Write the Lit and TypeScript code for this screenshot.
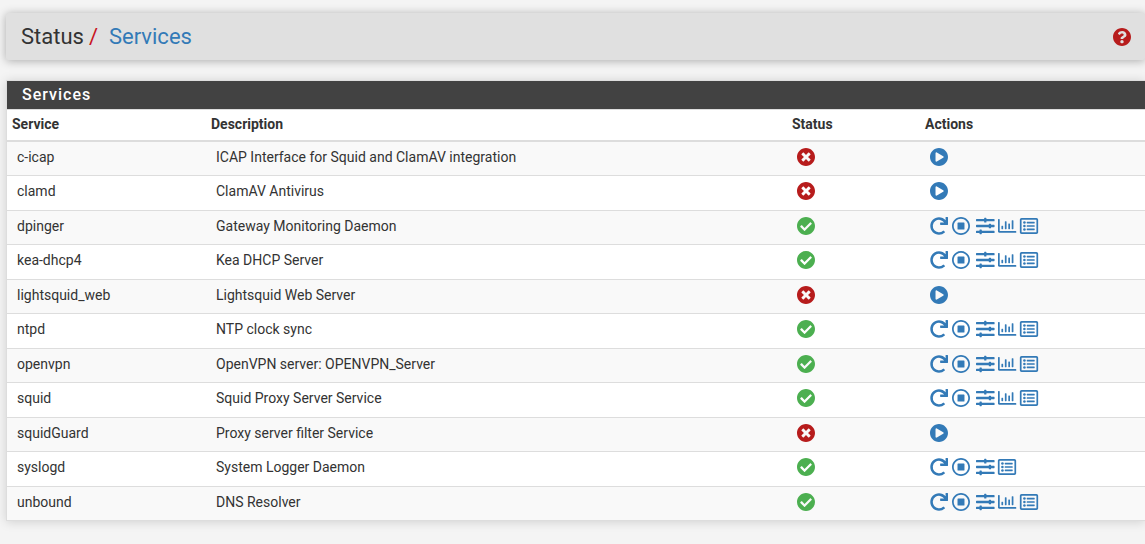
import { LitElement, html, svg, css, nothing } from "lit";
import { customElement, property } from "lit/decorators.js";

type IconName = "help" | "running" | "stopped" | "start" | "restart" | "stop" | "settings" | "graphs" | "logs";

const ICONS: Record<IconName, { box: string; shape: unknown }> = {
  help: {
    box: "8 8 496 496",
    shape: svg`<path d="M504 256c0 136.997-111.043 248-248 248S8 392.997 8 256C8 119.083 119.043 8 256 8s248 111.083 248 248zM262.655 90c-54.497 0-89.255 22.957-116.549 63.758-3.536 5.286-2.353 12.415 2.715 16.258l34.699 26.31c5.205 3.947 12.621 3.008 16.665-2.122 17.864-22.658 30.113-35.797 57.303-35.797 20.429 0 45.698 13.148 45.698 32.958 0 14.976-12.363 22.667-32.534 33.976C247.128 238.528 216 254.941 216 296v4c0 6.627 5.373 12 12 12h56c6.627 0 12-5.373 12-12v-1.333c0-28.462 83.186-29.647 83.186-106.667 0-58.002-60.165-102-116.531-102zM256 338c-25.365 0-46 20.635-46 46 0 25.364 20.635 46 46 46s46-20.636 46-46c0-25.365-20.635-46-46-46z"/>`,
  },
  running: {
    box: "8 8 496 496",
    shape: svg`<path d="M504 256c0 136.967-111.033 248-248 248S8 392.967 8 256 119.033 8 256 8s248 111.033 248 248zM227.314 387.314l184-184c6.248-6.248 6.248-16.379 0-22.627l-22.627-22.627c-6.248-6.249-16.379-6.249-22.628 0L216 308.118l-70.059-70.059c-6.248-6.248-16.379-6.248-22.628 0l-22.627 22.627c-6.248 6.248-6.248 16.379 0 22.627l104 104c6.249 6.249 16.379 6.249 22.628.001z"/>`,
  },
  stopped: {
    box: "8 8 496 496",
    shape: svg`<path d="M256 8C119 8 8 119 8 256s111 248 248 248 248-111 248-248S393 8 256 8zm121.6 313.1c4.7 4.7 4.7 12.3 0 17L338 377.6c-4.7 4.7-12.3 4.7-17 0L256 312l-65.1 65.6c-4.7 4.7-12.3 4.7-17 0L134.4 338c-4.7-4.7-4.7-12.3 0-17l65.6-65-65.6-65.1c-4.7-4.7-4.7-12.3 0-17l39.6-39.6c4.7-4.7 12.3-4.7 17 0l65 65.7 65.1-65.6c4.7-4.7 12.3-4.7 17 0l39.6 39.6c4.7 4.7 4.7 12.3 0 17L312 256l65.6 65.1z"/>`,
  },
  start: {
    box: "8 8 496 496",
    shape: svg`<path d="M256 8C119 8 8 119 8 256s111 248 248 248 248-111 248-248S393 8 256 8zm115.7 272l-176 101c-15.8 8.8-35.7-2.5-35.7-21V152c0-18.4 19.8-29.8 35.7-21l176 107c16.4 9.2 16.4 32.9 0 42z"/>`,
  },
  restart: {
    box: "0 0 512 512",
    shape: svg`<path d="M500.33 0h-47.41a12 12 0 0 0-12 12.57l4 82.76A247.42 247.42 0 0 0 256 8C119.34 8 7.9 119.53 8 256.19 8.1 393.07 119.1 504 256 504a247.1 247.1 0 0 0 166.18-63.91 12 12 0 0 0 .48-17.43l-34-34a12 12 0 0 0-16.38-.55A176 176 0 1 1 402.07 157.8l-101.53-4.87a12 12 0 0 0-12.57 12v47.41a12 12 0 0 0 12 12h200.33a12 12 0 0 0 12-12V12a12 12 0 0 0-12-12z"/>`,
  },
  stop: {
    box: "8 8 496 496",
    shape: svg`<path d="M504 256C504 119 393 8 256 8S8 119 8 256s111 248 248 248 248-111 248-248zm-448 0c0-110.5 89.5-200 200-200s200 89.5 200 200-89.5 200-200 200S56 366.5 56 256zm296-80v160c0 8.8-7.2 16-16 16H176c-8.8 0-16-7.2-16-16V176c0-8.8 7.2-16 16-16h160c8.8 0 16 7.2 16 16z"/>`,
  },
  settings: {
    box: "0 8 496 496",
    shape: svg`<path d="M496 384H160v-16c0-8.8-7.2-16-16-16h-32c-8.8 0-16 7.2-16 16v16H16c-8.8 0-16 7.2-16 16v32c0 8.8 7.2 16 16 16h80v16c0 8.8 7.2 16 16 16h32c8.8 0 16-7.2 16-16v-16h336c8.8 0 16-7.2 16-16v-32c0-8.8-7.2-16-16-16zm0-160h-80v-16c0-8.8-7.2-16-16-16h-32c-8.8 0-16 7.2-16 16v16H16c-8.8 0-16 7.2-16 16v32c0 8.8 7.2 16 16 16h336v16c0 8.8 7.2 16 16 16h32c8.8 0 16-7.2 16-16v-16h80c8.8 0 16-7.2 16-16v-32c0-8.8-7.2-16-16-16zm0-160H288V48c0-8.8-7.2-16-16-16h-32c-8.8 0-16 7.2-16 16v16H16C7.2 64 0 71.2 0 80v32c0 8.8 7.2 16 16 16h208v16c0 8.8 7.2 16 16 16h32c8.8 0 16-7.2 16-16v-16h208c8.8 0 16-7.2 16-16V80c0-8.8-7.2-16-16-16z"/>`,
  },
  graphs: {
    box: "0 8 504 504",
    shape: svg`<path d="M396.8 352h22.4c6.4 0 12.8-6.4 12.8-12.8V108.8c0-6.4-6.4-12.8-12.8-12.8h-22.4c-6.4 0-12.8 6.4-12.8 12.8v230.4c0 6.4 6.4 12.8 12.8 12.8zm-192 0h22.4c6.4 0 12.8-6.4 12.8-12.8V140.8c0-6.4-6.4-12.8-12.8-12.8h-22.4c-6.4 0-12.8 6.4-12.8 12.8v198.4c0 6.4 6.4 12.8 12.8 12.8zm96 0h22.4c6.4 0 12.8-6.4 12.8-12.8V204.8c0-6.4-6.4-12.8-12.8-12.8h-22.4c-6.4 0-12.8 6.4-12.8 12.8v134.4c0 6.4 6.4 12.8 12.8 12.8zM496 400H48V80c0-8.84-7.16-16-16-16H16C7.16 64 0 71.16 0 80v336c0 17.67 14.33 32 32 32h464c8.84 0 16-7.16 16-16v-16c0-8.84-7.16-16-16-16zm-387.2-48h22.4c6.4 0 12.8-6.4 12.8-12.8v-70.4c0-6.4-6.4-12.8-12.8-12.8h-22.4c-6.4 0-12.8 6.4-12.8 12.8v70.4c0 6.4 6.4 12.8 12.8 12.8z"/>`,
  },
  logs: {
    box: "4 4 504 504",
    shape: svg`<path d="M464 32H48C21.49 32 0 53.49 0 80v352c0 26.51 21.49 48 48 48h416c26.51 0 48-21.49 48-48V80c0-26.51-21.49-48-48-48zm-6 400H54a6 6 0 0 1-6-6V86a6 6 0 0 1 6-6h404a6 6 0 0 1 6 6v340a6 6 0 0 1-6 6zm-42-92v24c0 6.627-5.373 12-12 12H204c-6.627 0-12-5.373-12-12v-24c0-6.627 5.373-12 12-12h200c6.627 0 12 5.373 12 12zm0-96v24c0 6.627-5.373 12-12 12H204c-6.627 0-12-5.373-12-12v-24c0-6.627 5.373-12 12-12h200c6.627 0 12 5.373 12 12zm0-96v24c0 6.627-5.373 12-12 12H204c-6.627 0-12-5.373-12-12v-24c0-6.627 5.373-12 12-12h200c6.627 0 12 5.373 12 12z"/><circle cx="128" cy="160" r="36"/><circle cx="128" cy="256" r="36"/><circle cx="128" cy="352" r="36"/>`,
  },
};

@customElement("status-icon")
class StatusIcon extends LitElement {
  @property() name: IconName = "help";

  static styles = css`
    :host { display: block; width: 18px; height: 18px; }
    svg { display: block; width: 100%; height: 100%; overflow: visible; fill: currentColor; }
  `;

  render() {
    const icon = ICONS[this.name];
    return html`<svg viewBox=${icon.box} aria-hidden="true">${icon.shape}</svg>`;
  }
}

interface Service {
  name: string;
  description: string;
  running: boolean;
  graphs?: boolean;
}

const SERVICES: Service[] = [
  { name: "c-icap", description: "ICAP Interface for Squid and ClamAV integration", running: false },
  { name: "clamd", description: "ClamAV Antivirus", running: false },
  { name: "dpinger", description: "Gateway Monitoring Daemon", running: true, graphs: true },
  { name: "kea-dhcp4", description: "Kea DHCP Server", running: true, graphs: true },
  { name: "lightsquid_web", description: "Lightsquid Web Server", running: false },
  { name: "ntpd", description: "NTP clock sync", running: true, graphs: true },
  { name: "openvpn", description: "OpenVPN server: OPENVPN_Server", running: true, graphs: true },
  { name: "squid", description: "Squid Proxy Server Service", running: true, graphs: true },
  { name: "squidGuard", description: "Proxy server filter Service", running: false },
  { name: "syslogd", description: "System Logger Daemon", running: true },
  { name: "unbound", description: "DNS Resolver", running: true, graphs: true },
];

@customElement("services-table")
class ServicesTable extends LitElement {
  static styles = css`
    :host { display: block; }
    .services { width: 100%; border-collapse: separate; border-spacing: 0; table-layout: fixed; background: #fff; }
    .col-name { width: 199px; }
    .col-status { width: 133px; }
    .col-actions { width: 225px; }
    th, td { box-sizing: border-box; text-align: left; vertical-align: middle; line-height: 20px; }
    th { height: 32px; padding: 0 5px 2px; font-weight: 700; border-bottom: 2px solid #ddd; }
    td { height: 34px; padding: 0 10px 4px; border-top: 1px solid #ddd; }
    .row:nth-child(even) td { height: 35px; }
    .row:first-child td { height: 33px; border-top: 0; }
    .row:nth-child(odd) { background: #f9f9f9; }
    .ok { color: #4caf50; }
    .bad { color: #b71c1c; }
    .actions { display: flex; gap: 4px; }
    .group { display: flex; gap: 4px; padding-left: 2px; }
    .button { display: block; padding: 0; border: 0; background: none; color: #337ab7; cursor: pointer; }
  `;

  private link(name: IconName, title: string) {
    return html`<a class="button" href="#" title=${title} aria-label=${title}><status-icon .name=${name}></status-icon></a>`;
  }

  private button(name: IconName, title: string) {
    return html`<button class="button" type="button" title=${title} aria-label=${title}><status-icon .name=${name}></status-icon></button>`;
  }

  private actions(s: Service) {
    if (!s.running) return this.button("start", "Start service");
    return html`
      ${this.button("restart", "Restart service")}
      ${this.button("stop", "Stop service")}
      <span class="group">
        ${this.link("settings", "Related settings")}
        ${s.graphs ? this.link("graphs", "Related status") : nothing}
        ${this.link("logs", "Related log entries")}
      </span>`;
  }

  render() {
    return html`
      <table class="services">
        <colgroup><col class="col-name"><col><col class="col-status"><col class="col-actions"></colgroup>
        <thead>
          <tr><th scope="col">Service</th><th scope="col">Description</th><th scope="col">Status</th><th scope="col">Actions</th></tr>
        </thead>
        <tbody>
          ${SERVICES.map((s) => html`
            <tr class="row">
              <td>${s.name}</td>
              <td>${s.description}</td>
              <td><status-icon class=${s.running ? "ok" : "bad"} role="img" aria-label=${s.running ? "Running" : "Stopped"} .name=${s.running ? "running" : "stopped"}></status-icon></td>
              <td><div class="actions">${this.actions(s)}</div></td>
            </tr>`)}
        </tbody>
      </table>`;
  }
}

@customElement("app-root")
class AppRoot extends LitElement {
  static styles = css`
    :host {
      display: block;
      box-sizing: border-box;
      min-height: 100vh;
      padding: 13px 0 23px 6px;
      overflow: hidden;
      background: #f4f4f4;
      color: #333;
      font: 14px/20px Roboto, sans-serif;
    }
    .header {
      display: flex;
      align-items: center;
      justify-content: space-between;
      min-height: 47px;
      padding: 0 14px 0 15px;
      margin-bottom: 20px;
      background: #e0e0e0;
      border-radius: 2px;
      box-shadow: 0 1px 10px rgba(0, 0, 0, 0.3);
    }
    .crumbs { display: flex; margin: 0; padding: 0; list-style: none; font-size: 22px; line-height: 24px; }
    .crumb + .crumb::before { content: "/"; padding: 0 11px 0 5px; color: #c9141e; }
    .crumb a { color: #337ab7; text-decoration: none; }
    .help { color: #b71c1c; }
    .panel { border: 1px solid #ddd; border-right: 0; box-shadow: 0 1px 10px rgba(0, 0, 0, 0.15); }
    .title {
      margin: 0;
      padding: 4px 15px;
      border-bottom: 1px solid #ddd;
      background: #424242;
      color: #fff;
      font-size: 16px;
      font-weight: 500;
      line-height: 20px;
      letter-spacing: 1px;
    }
  `;

  render() {
    return html`
      <header class="header">
        <ol class="crumbs">
          <li class="crumb">Status</li>
          <li class="crumb"><a href="#">Services</a></li>
        </ol>
        <a class="help" href="#" title="Help for this page" aria-label="Help for this page"><status-icon .name=${"help"}></status-icon></a>
      </header>
      <section class="panel">
        <h2 class="title">Services</h2>
        <services-table></services-table>
      </section>`;
  }
}
